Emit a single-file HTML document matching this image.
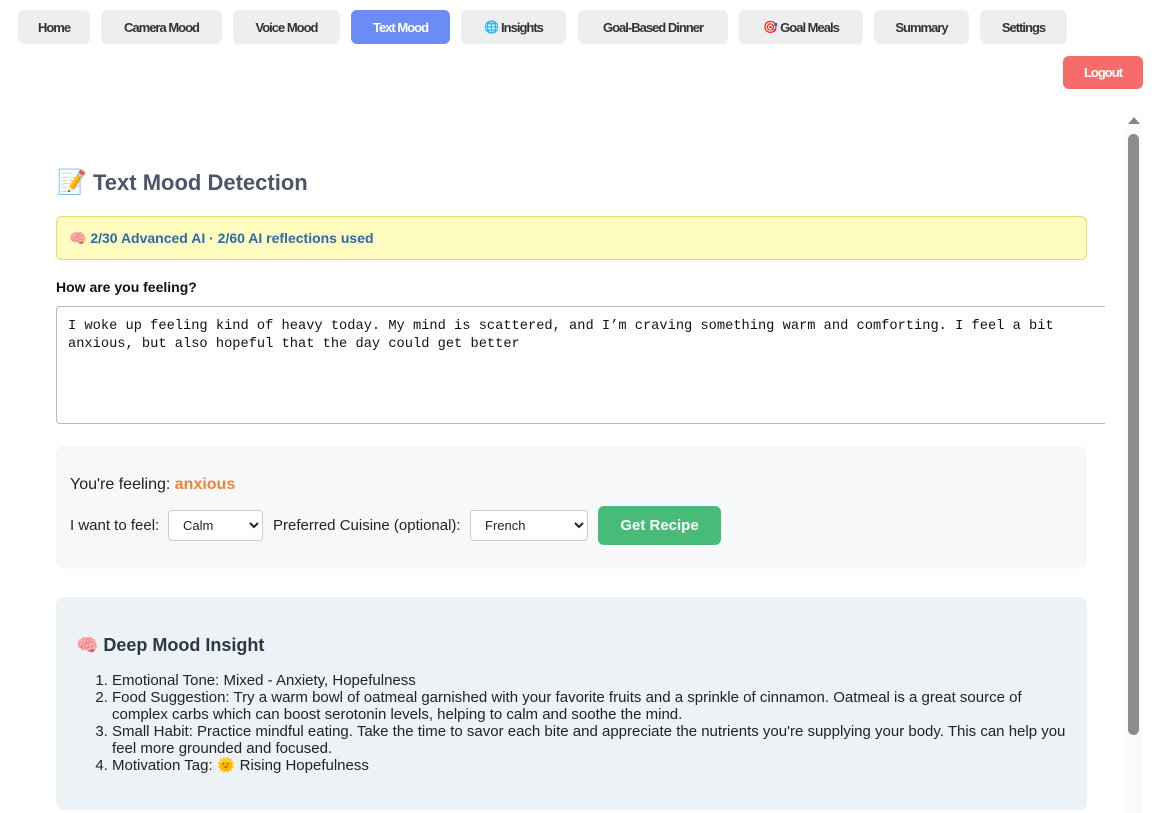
<!DOCTYPE html>
<html><head><meta charset="utf-8"><style>
*{box-sizing:border-box;margin:0;padding:0}
body{width:1167px;height:813px;overflow:hidden;background:#fff;font-family:"Liberation Sans",Arial,sans-serif;position:relative;color:#222}
.nav{position:absolute;top:10px;height:34px;background:#eeeeee;border-radius:6px;font-size:13px;font-weight:bold;color:#333;display:flex;align-items:center;justify-content:center;letter-spacing:-1px}
.a{position:absolute}
select{position:absolute;height:31px;border:1px solid #ccc;border-radius:4px;background:#fff;font-family:"Liberation Sans",Arial,sans-serif;font-size:13px;padding-left:10px;color:#222}
</style></head><body>
<div class="nav" style="left:18px;width:72px">Home</div>
<div class="nav" style="left:101px;width:121px">Camera Mood</div>
<div class="nav" style="left:233px;width:107px">Voice Mood</div>
<div class="nav" style="left:351px;width:99px;background:#6b8cf5;color:#fff">Text Mood</div>
<div class="nav" style="left:461px;width:105px"><span style="font-size:12px;margin-right:3px">🌐</span>Insights</div>
<div class="nav" style="left:578px;width:150px">Goal-Based Dinner</div>
<div class="nav" style="left:739px;width:124px"><span style="font-size:12px;margin-right:3px">🎯</span>Goal Meals</div>
<div class="nav" style="left:874px;width:95px">Summary</div>
<div class="nav" style="left:980px;width:87px">Settings</div>
<div class="nav" style="left:1063px;top:56px;height:33px;width:80px;background:#f76b6b;color:#fff">Logout</div>

<div class="a" style="left:57px;top:168px;font-size:22px;font-weight:bold;color:#4a5568;white-space:nowrap"><span style="font-size:24px">📝</span> Text Mood Detection</div>
<div class="a" style="left:56px;top:216px;width:1031px;height:44px;background:#fefcbf;border:1px solid #ecd96a;border-radius:6px;font-size:14px;font-weight:bold;color:#2c6aa8;padding:13px 0 0 12px">🧠 2/30 Advanced AI · 2/60 AI reflections used</div>
<div class="a" style="left:56px;top:279px;font-size:14px;font-weight:bold;color:#111">How are you feeling?</div>
<div class="a" style="left:56px;top:306px;width:1060px;height:118px;border:1px solid #bbb;border-right:none;border-radius:4px 0 0 4px;font-family:'Liberation Mono',monospace;font-size:13.7px;line-height:18px;padding:11px 40px 11px 11px;color:#111">I woke up feeling kind of heavy today. My mind is scattered, and I’m craving something warm and comforting. I feel a bit anxious, but also hopeful that the day could get better</div>
<div class="a" style="left:1105px;top:300px;width:62px;height:130px;background:#fff"></div>

<div class="a" style="left:1128px;top:117px;width:0;height:0;border-left:6px solid transparent;border-right:6px solid transparent;border-bottom:7px solid #888"></div>
<div class="a" style="left:1125px;top:130px;width:17px;height:683px;background:#fafafa"></div>
<div class="a" style="left:1128px;top:134px;width:11px;height:601px;background:#8c8c8c;border-radius:6px"></div>

<div class="a" style="left:56px;top:446px;width:1031px;height:123px;background:#f7f8fa;border-radius:8px"></div>
<div class="a" style="left:70px;top:476px;font-size:16px;color:#222">You're feeling: <b style="color:#e8863a">anxious</b></div>
<div class="a" style="left:70px;top:517px;font-size:15px;color:#222">I want to feel:</div>
<select style="left:168px;top:510px;width:95px"><option>Calm</option></select>
<div class="a" style="left:273px;top:517px;font-size:15px;color:#222">Preferred Cuisine (optional):</div>
<select style="left:470px;top:510px;width:118px"><option>French</option></select>
<div class="a" style="left:598px;top:506px;width:123px;height:39px;background:#48bb78;border-radius:6px;color:#fff;font-weight:bold;font-size:15px;display:flex;align-items:center;justify-content:center">Get Recipe</div>

<div class="a" style="left:56px;top:597px;width:1031px;height:213px;background:#edf2f7;border-radius:8px"></div>
<div class="a" style="left:76px;top:635px;font-size:18px;font-weight:bold;color:#2d3748">🧠 Deep Mood Insight</div>
<ol class="a" style="left:112px;top:672px;width:960px;font-size:15px;line-height:17px;color:#222;padding-left:0">
<li>Emotional Tone: Mixed - Anxiety, Hopefulness</li>
<li>Food Suggestion: Try a warm bowl of oatmeal garnished with your favorite fruits and a sprinkle of cinnamon. Oatmeal is a great source of complex carbs which can boost serotonin levels, helping to calm and soothe the mind.</li>
<li>Small Habit: Practice mindful eating. Take the time to savor each bite and appreciate the nutrients you're supplying your body. This can help you feel more grounded and focused.</li>
<li>Motivation Tag: 🌞 Rising Hopefulness</li>
</ol>
</body></html>
